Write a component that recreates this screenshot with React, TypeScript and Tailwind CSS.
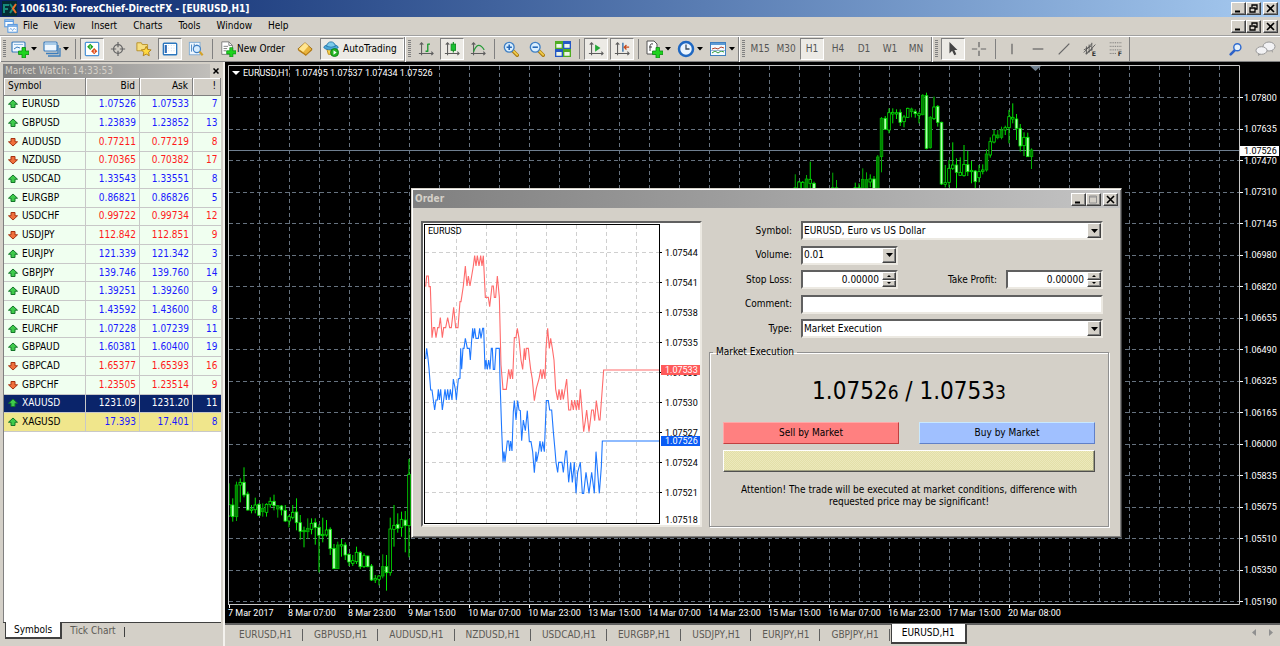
import React, { useState } from 'react';

type Quote = [string, string, string, number, 'up' | 'down'];

const quotes: Quote[] = [
  ['EURUSD', '1.07526', '1.07533', 7, 'up'],
  ['GBPUSD', '1.23839', '1.23852', 13, 'up'],
  ['AUDUSD', '0.77211', '0.77219', 8, 'down'],
  ['NZDUSD', '0.70365', '0.70382', 17, 'down'],
  ['USDCAD', '1.33543', '1.33551', 8, 'up'],
  ['EURGBP', '0.86821', '0.86826', 5, 'up'],
  ['USDCHF', '0.99722', '0.99734', 12, 'down'],
  ['USDJPY', '112.842', '112.851', 9, 'down'],
  ['EURJPY', '121.339', '121.342', 3, 'up'],
  ['GBPJPY', '139.746', '139.760', 14, 'up'],
  ['EURAUD', '1.39251', '1.39260', 9, 'up'],
  ['EURCAD', '1.43592', '1.43600', 8, 'up'],
  ['EURCHF', '1.07228', '1.07239', 11, 'up'],
  ['GBPAUD', '1.60381', '1.60400', 19, 'up'],
  ['GBPCAD', '1.65377', '1.65393', 16, 'down'],
  ['GBPCHF', '1.23505', '1.23514', 9, 'down'],
  ['XAUUSD', '1231.09', '1231.20', 11, 'up'],
  ['XAGUSD', '17.393', '17.401', 8, 'up'],
];

const chartTabs = ['EURUSD,H1', 'GBPUSD,H1', 'AUDUSD,H1', 'NZDUSD,H1', 'USDCAD,H1', 'EURGBP,H1', 'USDJPY,H1', 'EURJPY,H1', 'GBPJPY,H1'];
const prices = ['1.07800', '1.07635', '1.07470', '1.07310', '1.07145', '1.06980', '1.06820', '1.06655', '1.06490', '1.06325', '1.06165', '1.06000', '1.05835', '1.05675', '1.05510', '1.05350', '1.05190'];
const dates = ['7 Mar 2017', '8 Mar 07:00', '8 Mar 23:00', '9 Mar 15:00', '10 Mar 07:00', '10 Mar 23:00', '13 Mar 15:00', '14 Mar 07:00', '14 Mar 23:00', '15 Mar 15:00', '16 Mar 07:00', '16 Mar 23:00', '17 Mar 15:00', '20 Mar 08:00'];
const tickPrices = ['1.07544', '1.07541', '1.07538', '1.07535', '1.07533', '1.07530', '1.07527', '1.07524', '1.07521'];

// high, low, body top, body bottom, kind (0 hollow, 1 bear, 2 dark); units are 1/3 px
type Candle = [number, number, number, number, number];

const firstCandles: Candle[] = [
  [130, 230, 194, 228, 0], [175, 245, 195, 230, 1], [125, 243, 135, 230, 2], [115, 187, 127, 135, 0],
  [82, 172, 127, 165, 1], [155, 212, 162, 210, 1], [195, 220, 207, 211, 0], [173, 220, 195, 209, 0],
  [190, 228, 193, 226, 1], [190, 230, 205, 215, 2], [190, 230, 193, 217, 0], [172, 203, 184, 194, 0],
  [164, 211, 184, 197, 1], [195, 233, 197, 207, 2], [195, 226, 198, 210, 1], [195, 246, 211, 243, 1],
  [225, 262, 230, 243, 0], [195, 238, 217, 232, 0], [175, 271, 216, 248, 1], [225, 299, 248, 274, 1],
  [260, 322, 271, 275, 0], [235, 296, 265, 275, 2], [235, 283, 250, 268, 0], [235, 314, 248, 263, 1],
  [253, 397, 262, 286, 1], [233, 307, 283, 287, 0], [240, 290, 270, 285, 0], [262, 345, 268, 326, 1],
  [312, 387, 325, 386, 1], [305, 387, 315, 386, 2], [297, 350, 314, 318, 0], [307, 360, 315, 345, 1],
  [340, 378, 343, 366, 1], [345, 378, 362, 370, 0], [320, 372, 337, 365, 0], [333, 387, 337, 380, 1],
  [340, 384, 347, 380, 0], [347, 382, 348, 380, 1], [372, 423, 378, 420, 1], [405, 429, 415, 420, 0],
  [405, 436, 408, 418, 0], [343, 415, 380, 408, 2], [345, 452, 380, 398, 1], [233, 407, 267, 398, 0],
  [195, 320, 256, 268, 0], [220, 278, 253, 265, 1], [215, 290, 238, 262, 0], [213, 337, 240, 257, 1],
  [57, 352, 103, 257, 0],
];

const none: Candle = [340, 342, 340, 342, 2];
const lastCandles: Candle[] = [
  [283, 325, 323, 325, 2], [303, 325, 306, 340, 0], [303, 325, 307, 340, 0], [285, 325, 297, 340, 2],
  [245, 325, 298, 310, 0], [305, 325, 310, 340, 1], none, none, none, none, [278, 325, 323, 325, 2],
  [300, 325, 323, 325, 2], none, none, none, none, [308, 325, 323, 325, 0], [310, 325, 323, 325, 0],
  [265, 325, 298, 325, 2], [277, 325, 299, 325, 2], [283, 322, 297, 306, 0], [288, 325, 297, 325, 1],
  [225, 325, 231, 325, 2], [111, 277, 115, 230, 2], [108, 150, 115, 148, 1], [85, 160, 98, 150, 0],
  [85, 130, 97, 102, 0], [88, 117, 98, 102, 0], [88, 138, 97, 127, 1], [105, 142, 111, 125, 0],
  [83, 113, 85, 112, 0], [83, 112, 87, 95, 2], [88, 113, 95, 101, 1], [95, 130, 101, 106, 0],
  [42, 106, 46, 104, 2], [38, 208, 47, 205, 1], [108, 206, 112, 203, 2], [50, 120, 81, 116, 0],
  [75, 140, 79, 127, 1], [125, 315, 127, 312, 1], [255, 322, 308, 313, 0], [240, 322, 265, 307, 0],
  [187, 270, 255, 265, 0], [235, 325, 255, 277, 1], [232, 288, 277, 286, 0], [195, 290, 253, 287, 0],
  [213, 288, 254, 275, 1], [243, 310, 271, 275, 0], [270, 325, 273, 305, 1], [255, 307, 275, 293, 0],
  [253, 283, 270, 274, 0], [207, 275, 222, 270, 2], [172, 233, 185, 225, 0], [150, 190, 165, 186, 0],
  [150, 178, 165, 173, 2], [140, 178, 150, 172, 2], [137, 165, 143, 150, 0], [90, 190, 110, 143, 0],
  [70, 130, 112, 117, 0], [102, 180, 117, 145, 1], [132, 215, 145, 198, 1], [157, 228, 172, 197, 0],
  [158, 230, 172, 230, 1], [205, 267, 210, 230, 2],
];

const askLine = '47,-220 50,-252 55,-252 57,-220 61,-220 66,-67 70,-97 74,-97 78,-67 83,-97 87,-97 91,-127 97,-67 101,-97 107,-97 113,-127 119,-97 124,-97 131,-158 137,-97 144,-97 150,-175 153,-175 160,-222 166,-282 171,-222 175,-252 180,-222 185,-252 190,-282 194,-313 198,-282 202,-313 207,-282 212,-313 216,-282 220,-313 226,-188 235,-188 239,-160 246,-222 250,-222 253,-188 257,-188 262,-252 268,-188 273,15 279,88 289,88 296,28 301,57 304,28 308,57 313,-67 318,-67 322,-95 327,-65 333,0 338,28 343,-35 346,0 349,-35 355,-35 358,-5 362,28 367,58 373,122 379,85 387,57 392,28 396,57 400,28 405,57 408,-35 413,-95 418,-35 422,-65 427,-35 432,0 437,88 443,120 447,88 452,120 456,88 460,118 465,88 470,57 476,150 482,150 485,120 490,150 494,120 499,150 503,120 507,150 511,88 516,150 521,215 526,182 530,150 537,215 545,150 550,150 554,182 559,122 567,180 570,180 581,30 748,30';
const bidLine = '47,-3 50,-35 54,-5 57,25 62,90 66,90 70,120 74,150 78,120 82,120 85,88 88,120 92,88 97,150 101,120 105,88 109,120 113,88 117,120 121,88 126,120 130,57 136,88 139,120 145,57 150,55 152,-35 155,28 159,-35 162,-35 166,-65 172,-35 178,-35 181,0 185,-60 188,-95 190,-65 194,-95 198,-65 205,-65 209,-95 213,-65 218,-95 221,-95 225,28 228,0 232,28 236,0 240,28 244,-35 247,-35 250,28 254,28 258,-35 268,-35 270,60 275,210 279,305 282,275 285,305 292,243 296,243 299,273 302,243 306,273 310,155 313,122 318,180 323,122 327,150 331,152 335,242 340,180 346,212 352,152 358,245 363,245 368,275 373,338 378,275 380,305 386,275 390,243 394,275 398,245 403,275 409,122 415,122 419,150 425,150 430,215 435,270 438,307 443,337 446,307 456,307 460,337 467,273 470,273 476,367 482,307 487,367 493,307 498,400 503,337 511,307 517,400 521,400 528,337 537,400 545,337 553,400 558,275 568,400 574,320 577,243 748,243';

const raised = 'border border-t-white border-l-white border-r-[#404040] border-b-[#404040] bg-[#d4d0c8] shadow-[inset_-1px_-1px_0_#808080]';
const sunken = 'border-2 border-t-[#606060] border-l-[#606060] border-r-[#ece9e2] border-b-[#ece9e2] bg-white';
const pushed = 'border border-t-[#808080] border-l-[#808080] border-r-white border-b-white bg-[#eceae5]';

function Icon({ children, size = 18 }: { children: React.ReactNode; size?: number }) {
  return (
    <svg width={size} height={size} viewBox="0 0 18 18" fill="none" className="shrink-0" aria-hidden="true">
      {children}
    </svg>
  );
}

const Plus = () => (
  <path d="M11 7.5h3.5v3.5H18v3.5h-3.5V18H11v-3.5H7.5V11H11z" fill="#1fd41f" stroke="#0a8a12" strokeWidth=".8" />
);

const Axes = () => <path d="M4 2v14M1 14h16M2 4l2-2 2 2M15 12l2 2-2 2" stroke="#5d5d5d" strokeWidth="1.2" />;

const Lens = ({ sign }: { sign: string }) => (
  <>
    <path d="m11 11 5 5" stroke="#a97a10" strokeWidth="4" strokeLinecap="round" />
    <path d="m11.5 11 4.5 4.5" stroke="#f0cb4a" strokeWidth="2" strokeLinecap="round" />
    <circle cx="7" cy="7" r="5.5" fill="#d9efff" stroke="#3f7fc4" strokeWidth="1.5" />
    <path d={sign} stroke="#2668b8" strokeWidth="1.8" />
  </>
);

const icons: Record<string, React.ReactNode> = {
  newChart: <><rect x="1" y="2" width="13" height="10" rx="1" fill="#eef7ff" stroke="#3b7dbd" strokeWidth="1.2" /><path d="M3 4.5h9" stroke="#8ab8e0" /><path d="m3 9 3-2 3 1" stroke="#3b7dbd" /><Plus /></>,
  profiles: <><path d="M5 16h12V8" stroke="#3b7dbd" strokeWidth="1.3" /><path d="M3 13.5h12V5" stroke="#3b7dbd" strokeWidth="1.3" /><rect x="1" y="2" width="13" height="9" rx="1" fill="#eef7ff" stroke="#3b7dbd" strokeWidth="1.2" /><path d="M2 4h11" stroke="#8fbde2" strokeWidth="1.5" /></>,
  market: <><rect x="1.5" y="1.5" width="15" height="15" rx="1" fill="#fff" stroke="#4c94d8" strokeWidth="1.4" /><path d="m7 3 3.500 3.500L7 10 3.500 6.500z" fill="#18a51b" /><path d="m11.500 8 3.500 3.500-3.500 3.500L8 11.500z" fill="#e04a15" /><path d="M7 5v3.500M11.500 10v3.500" stroke="#fff" strokeWidth=".8" /></>,
  target: <><circle cx="9" cy="9" r="5" stroke="#666" strokeWidth="1.5" /><path d="M9 1v6M9 11v6M1 9h6M11 9h6" stroke="#666" strokeWidth="1.4" /></>,
  favorites: <><path d="M1 2h5l1 2h6v7H1z" fill="#f7df80" stroke="#b48c22" /><path d="m11.5 6 1.700 3.500 3.800.5-2.800 2.700.7 3.900-3.400-1.900-3.400 1.900.7-3.900L6 10l3.800-.5z" fill="#ffd940" stroke="#ad7b12" /></>,
  navigator: <><rect x="1.5" y="2.5" width="15" height="13" rx="1" fill="#fff" stroke="#2d78bf" strokeWidth="1.5" /><path d="M3 4.500h2.500v9H3z" fill="#2d6cb8" /><path d="M7 5h1m2 0h1m2 0h1M7 8h1m2 0h1m2 0h1M7 11h1m2 0h1m2 0h1" stroke="#b9d6ee" /></>,
  tester: <><rect x="1.5" y="1.5" width="12" height="14" fill="#eff7ff" stroke="#7aa9d4" /><path d="M4 4v8M7 3v8M10 4v6" stroke="#3b7dbd" /><circle cx="10" cy="9" r="4" fill="#d8edff" stroke="#3f7fc4" strokeWidth="1.3" /><path d="m13 12 3.500 4" stroke="#d4a228" strokeWidth="2.4" /></>,
  order: <><path d="M2 1h8l4 4v10H2z" fill="#fff" stroke="#777" /><path d="M10 1v4h4M4 6h5M4 8.500h4M4 11h3" stroke="#777" /><Plus /></>,
  book: <><path d="M1 9 9 2l8 7-7 7z" fill="#e9b43c" stroke="#9b6a12" /><path d="m2 9 7-7 4 3.500-6 7z" fill="#ffe58f" /><path d="m1 9 .5 2 8.500 5.500 7-6V9l-7 6z" fill="#b97f18" /></>,
  robot: <><path d="M4 8h10l-1 7H6z" fill="#f7d34d" stroke="#ba8a19" /><ellipse cx="9" cy="7" rx="8" ry="3" fill="#4aa8d8" stroke="#2878ab" /><path d="M4 6q1-5 5-5t5 5q-5 2-10 0" fill="#7bcbea" stroke="#2878ab" /><circle cx="13" cy="13" r="4.5" fill="#22b422" stroke="#0c7c14" /><path d="m11.800 10.500 3.500 2.500-3.500 2.500z" fill="#fff" /></>,
  bars: <><Axes /><path d="M11 3v9M11 3.500h2.500M8.500 11.500H11" stroke="#199b2c" strokeWidth="1.5" /></>,
  candles: <><Axes /><path d="M10.500 1v12" stroke="#128c21" strokeWidth="1.3" /><rect x="8" y="3.5" width="5" height="7" fill="#19c231" stroke="#128c21" /></>,
  line: <><Axes /><path d="M4 12q5-13 12-2" stroke="#259b37" strokeWidth="1.4" /></>,
  zoomIn: <Lens sign="M4 7h6M7 4v6" />,
  zoomOut: <Lens sign="M4 7h6" />,
  tile: <><path d="M0 0h9v9H0z" fill="#4fac22" /><path d="M9 0h9v9H9z" fill="#2458c4" /><path d="M0 9h9v9H0z" fill="#2458c4" /><path d="M9 9h9v9H9z" fill="#4fac22" /><path d="M1.500 3.500h6v4h-6zM10.500 3.500h6v4h-6zM1.500 12.500h6v4h-6zM10.500 12.500h6v4h-6z" fill="#eef6e8" /></>,
  scroll: <><Axes /><path d="m8 4 6 4-6 4z" fill="#22a837" /></>,
  shift: <><Axes /><path d="M10 2v10" stroke="#2c6ca8" strokeWidth="1.5" /><path d="M17 7h-5M14 4.500 11.500 7 14 9.500" stroke="#c84a1a" strokeWidth="1.4" /></>,
  indicators: <><path d="M2 1h7l3 3v10H2z" fill="#fff" stroke="#555" /><path d="M8 4Q5 3 5 7v4M4 7h3" stroke="#444" /><Plus /></>,
  clock: <><circle cx="9" cy="9" r="7" fill="#eaf5ff" stroke="#1f68c2" strokeWidth="2.5" /><path d="M9 4.500V9h3.500" stroke="#3a4b5c" strokeWidth="1.3" /></>,
  template: <><rect x="1.5" y="2.5" width="15" height="13" fill="#f4fbff" stroke="#3f7fbf" /><path d="M2 4h14" stroke="#5c9bd5" strokeWidth="2" /><path d="m3 9 3-1 3 1 3-2 3 1" stroke="#b34128" /><path d="m3 13 3-2 3 2 3-2 3 1" stroke="#309b3c" /><path d="M2 10.500h14" stroke="#9bb9d4" /></>,
  cursor: <path d="M5 1v13l3-3 2.500 5 2.200-1L10.500 10H14z" fill="#444" />,
  cross: <path d="M9 1v6M9 11v6M1 9h6M11 9h6" stroke="#666" strokeWidth="1.4" />,
  vline: <path d="M9 3v12" stroke="#666" strokeWidth="1.4" />,
  hline: <path d="M3 9h12" stroke="#666" strokeWidth="1.4" />,
  trend: <path d="M3 15 15 3" stroke="#666" strokeWidth="1.4" />,
  channel: <><path d="m2 13 9-10M5 15 15 4M2 10l8-4M4 14l8-5M5 6v9M8 4v9M11 2v9" stroke="#555" /><text x="11" y="17" fontSize="7" fill="#333" fontFamily="DejaVu Sans" fontWeight="bold">E</text></>,
  fibo: <><path d="M2 2h14M2 6h14M2 10h14M2 14h8" stroke="#666" strokeDasharray="1 1" /><text x="11" y="17" fontSize="7" fill="#333" fontFamily="DejaVu Sans" fontWeight="bold">F</text></>,
  search: <><path d="m8 10-5 5" stroke="#2e62c8" strokeWidth="3" strokeLinecap="round" /><circle cx="10.5" cy="7" r="4" fill="#e5f1fb" stroke="#2e6ad0" strokeWidth="1.6" /></>,
};

function Tool({ name, label, pressed = false }: { name: string; label: string; pressed?: boolean }) {
  return (
    <button aria-label={label} className={`mx-px flex h-[22px] w-6 items-center justify-center ${pressed ? pushed : ''}`}>
      <Icon size={16}>{icons[name]}</Icon>
    </button>
  );
}

function DropTool({ name, label }: { name: string; label: string }) {
  return (
    <button aria-label={label} className="flex h-[22px] w-8 items-center justify-center gap-[2px]">
      <Icon>{icons[name]}</Icon>
      <svg width="6" height="4" aria-hidden="true"><path d="M0 0h6L3 3.500z" fill="#000" /></svg>
    </button>
  );
}

const Sep = () => <span className="mx-[3px] h-5 w-px bg-[#808080]" />;
const Grip = () => <span className="mx-[2px] h-[18px] w-[3px] bg-[repeating-linear-gradient(to_bottom,#808080_0_1px,#d4d0c8_1px_2px)]" />;

function ToolGroup({ children }: { children: React.ReactNode }) {
  return <div className="flex h-[25px] items-center border-r border-l border-l-white border-r-[#808080]">{children}</div>;
}

function WindowButtons({ disabledMax = false }: { disabledMax?: boolean }) {
  const base = `flex h-[13px] w-[15px] items-center justify-center ${raised}`;
  return (
    <div className="flex">
      <button aria-label="Minimize" className={base}>
        <svg width="9" height="9"><path d="M1 7.500h5" stroke="#000" strokeWidth="2" /></svg>
      </button>
      <button aria-label="Restore" className={base}>
        {disabledMax ? (
          <svg width="9" height="9"><path d="M.5 1h7v7h-7zM.5 2h7" stroke="#909090" fill="none" /></svg>
        ) : (
          <svg width="9" height="9"><path d="M3 3V1h5v4H6M1 4h5v4H1z" stroke="#000" strokeWidth="1.3" fill="none" /></svg>
        )}
      </button>
      <button aria-label="Close" className={`ml-[2px] ${base}`}>
        <svg width="9" height="9"><path d="m1 1 7 7M8 1 1 8" stroke="#000" strokeWidth="1.6" /></svg>
      </button>
    </div>
  );
}

function Arrow({ dir }: { dir: 'up' | 'down' }) {
  return dir === 'up' ? (
    <svg width="10" height="10" viewBox="0 0 10 10" className="shrink-0"><path d="m5 1 4.500 4.200H7V8.500H3V5.200H.5z" fill="#3ecb4b" stroke="#14752a" /></svg>
  ) : (
    <svg width="10" height="10" viewBox="0 0 10 10" className="shrink-0"><path d="M5 9 .5 4.800H3V1.500h4v3.300h2.500z" fill="#f0703c" stroke="#a53312" /></svg>
  );
}

function MarketWatch() {
  const th = 'border-r border-b border-[#808080] bg-[#d4d0c8] px-[4px] font-normal shadow-[inset_1px_1px_0_#fff]';
  return (
    <aside className="flex w-[225px] shrink-0 flex-col border-r-2 border-r-[#f4f2ee] pt-[2px] pr-[2px] pb-[6px] pl-[3px]">
      <div className="flex h-[14px] items-center justify-between bg-gradient-to-r from-[#808080] to-[#c4c2be] pl-[2px] text-[#d4d0c8]">
        <span>Market Watch: 14:33:53</span>
        <button aria-label="Close" className="flex h-[14px] w-[11px] items-center justify-center bg-[#d4d0c8]">
          <svg width="6" height="6"><path d="m.5.5 5 5M5.500.5l-5 5" stroke="#000" strokeWidth="1.5" /></svg>
        </button>
      </div>
      <div className="flex flex-1 flex-col border-l border-[#808080] bg-white">
        <table className="h-[354px] w-full table-fixed border-collapse">
          <colgroup>
            <col />
            <col className="w-[54px]" />
            <col className="w-[53px]" />
            <col className="w-[28px]" />
          </colgroup>
          <thead>
            <tr className="h-[17px]">
              <th className={`text-left ${th}`}>Symbol</th>
              <th className={`text-right ${th}`}>Bid</th>
              <th className={`text-right ${th}`}>Ask</th>
              <th className={`text-right ${th}`}>!</th>
            </tr>
          </thead>
          <tbody>
            {quotes.map(([symbol, bid, ask, spread, dir]) => {
              const selected = symbol === 'XAUUSD';
              const gold = symbol === 'XAGUSD';
              const num = `border-l border-[#c8c8c8] pr-[3px] text-right ${selected ? 'text-white' : dir === 'up' ? 'text-[#1a1aff]' : 'text-[#ff1a1a]'}`;
              return (
                <tr key={symbol} className={`border-b border-[#c8c8c8] ${selected ? 'bg-[#0a246a] text-white' : gold ? 'bg-[#f0e68c]' : 'bg-[#f0fff0]'}`}>
                  <td className="p-0 pl-1">
                    <span className="flex items-center gap-1"><Arrow dir={dir} />{symbol}</span>
                  </td>
                  <td className={num}>{bid}</td>
                  <td className={num}>{ask}</td>
                  <td className={num}>{spread}</td>
                </tr>
              );
            })}
          </tbody>
        </table>
      </div>
      <div className="flex h-[18px] items-start border-t border-[#404040] pl-[2px]">
        <button className="-mt-px h-[17px] border-r-2 border-b-2 border-l border-[#404040] bg-white px-2">Symbols</button>
        <button className="h-4 px-2 text-[#5c5a55]">Tick Chart</button>
        <span className="mt-1 h-[10px] w-px bg-[#404040]" />
      </div>
    </aside>
  );
}

function Candles({ data, from, base }: { data: Candle[]; from: number; base: number }) {
  return (
    <g>
      {data.map(([high, low, top, bottom, kind], i) => {
        const x = 4 + (from + i) * 3.75;
        const fill = kind === 1 ? '#b4ffb4' : kind === 2 ? '#008200' : '#000';
        const stroke = kind === 2 ? '#00b000' : '#00e600';
        return (
          <g key={i} stroke={stroke}>
            <path d={`M${x} ${base + high / 3}V${base + low / 3}`} />
            <rect x={x - 1.3} y={base + top / 3} width="2.6" height={Math.max(1, (bottom - top) / 3)} fill={fill} strokeWidth=".8" />
          </g>
        );
      })}
    </g>
  );
}

function PriceChart() {
  return (
    <svg viewBox="0 0 1055 561" className="block h-auto w-full bg-black font-['Roboto',sans-serif] text-[9px]" role="img" aria-label="EURUSD,H1 chart">
      <g stroke="#66727f" strokeDasharray="4 3">
        {Array.from({ length: 33 }, (_, i) => <path key={i} d={`M${34.5 + i * 30} 4V542`} />)}
        {prices.map((p, i) => {
          const y = Math.round(35 + i * 31.53) + 0.5;
          return <path key={p} d={`M4 ${y}H1014`} />;
        })}
      </g>
      <path d="M3 88.5h1012" stroke="#6f7f90" />
      <clipPath id="plot"><path d="M3 3h1012v539H3z" /></clipPath>
      <g clipPath="url(#plot)">
        <Candles data={firstCandles} from={0} base={378} />
        <Candles data={lastCandles} from={151} base={18} />
      </g>
      <path d="M3.5 542V3.500H1014.500V542.500H3" fill="none" stroke="#c8c8c8" />
      <path d="M805 4h11l-5.500 5z" fill="#708090" />
      <path d="M7 9h8l-4 4z" fill="#fff" />
      <text x="18" y="14" fill="#fff">EURUSD,H1</text>
      <text x="70" y="14" fill="#fff">1.07495 1.07537 1.07434 1.07526</text>
      {prices.map((p, i) => (
        <g key={p}>
          <path d={`M1015 ${Math.round(35 + i * 31.53) + 0.5}h3`} stroke="#fff" />
          <text x="1019" y={Math.round(38.5 + i * 31.53)} fill="#fff">{p}</text>
        </g>
      ))}
      <rect x="1015" y="84" width="39" height="10" fill="#fff" />
      <text x="1019" y="92" fill="#000">1.07526</text>
      {dates.map((d, i) => (
        <g key={d}>
          <path d={`M${4.5 + i * 60} 543v3`} stroke="#fff" />
          <text x={3 + i * 60} y="554" fill="#fff">{d}</text>
        </g>
      ))}
    </svg>
  );
}

function TickChart() {
  return (
    <div className={`w-[281px] shrink-0 self-start ${sunken}`}>
      <svg viewBox="0 0 277 302" className="block w-full font-['Roboto',sans-serif] text-[9px]" role="img" aria-label="EURUSD tick chart">
        <g stroke="#cfcfcf" strokeDasharray="4 3">
          {[33, 63, 93, 123, 153, 183, 213].map((x) => <path key={x} d={`M${x + 0.5} 2V300`} />)}
          {tickPrices.map((p, i) => <path key={p} d={`M2 ${29.5 + i * 30}H237`} />)}
        </g>
        <g transform="translate(-13 137) scale(.33333)" fill="none" strokeWidth="3.3">
          <polyline points={askLine} stroke="#ff6b6b" />
          <polyline points={bidLine} stroke="#1e78ff" />
        </g>
        <rect x="1.5" y="1.5" width="235" height="299" fill="none" stroke="#000" />
        <text x="5" y="11">EURUSD</text>
        {tickPrices.map((p, i) => (
          <g key={p}>
            <path d={`M237 ${29.5 + i * 30}h2`} stroke="#000" />
            <text x="242" y={33 + i * 30}>{p}</text>
          </g>
        ))}
        <text x="242" y="300">1.07518</text>
        <rect x="238" y="142" width="39" height="10" fill="#ff5a5a" />
        <text x="242" y="150" fill="#fff">1.07533</text>
        <rect x="238" y="213" width="39" height="10" fill="#0a5cf5" />
        <text x="242" y="221" fill="#fff">1.07526</text>
      </svg>
    </div>
  );
}

function SelectBox({ id, width, value }: { id: string; width: string; value: string }) {
  return (
    <div className={`relative h-[19px] ${width} ${sunken}`}>
      <select id={id} className="block h-full w-full appearance-none bg-transparent pl-px outline-none">
        <option>{value}</option>
      </select>
      <span className={`pointer-events-none absolute inset-y-0 right-0 flex w-[14px] items-center justify-center ${raised}`}>
        <svg width="7" height="4"><path d="M0 0h7L3.500 4z" fill="#000" /></svg>
      </span>
    </div>
  );
}

function SpinBox({ id }: { id: string }) {
  const [value, setValue] = useState(0);
  const btn = `flex flex-1 w-[14px] items-center justify-center ${raised}`;
  return (
    <div className={`flex h-[19px] w-[97px] ${sunken}`}>
      <input id={id} className="w-full min-w-0 pr-[3px] text-right outline-none" value={value.toFixed(5)} readOnly />
      <div className="flex shrink-0 flex-col">
        <button aria-label="Increase" className={btn} onClick={() => setValue(value + 0.00001)}>
          <svg width="4" height="2"><path d="M0 2h4L2 0z" fill="#000" /></svg>
        </button>
        <button aria-label="Decrease" className={btn} onClick={() => setValue(Math.max(0, value - 0.00001))}>
          <svg width="4" height="2"><path d="M0 0h4L2 2z" fill="#000" /></svg>
        </button>
      </div>
    </div>
  );
}

function OrderDialog() {
  const label = 'w-[83px] shrink-0 text-right';
  return (
    <section role="dialog" aria-label="Order" className="absolute top-[126px] left-[186px] w-[711px] border border-t-[#d4d0c8] border-l-[#d4d0c8] border-r-[#404040] border-b-[#404040] bg-[#d4d0c8] p-px shadow-[inset_1px_1px_0_#fff,inset_-1px_-1px_0_#808080]">
      <div className="flex h-[18px] items-center justify-between bg-gradient-to-r from-[#808080] to-[#c4c4c4] pr-[2px] pl-[2px] font-bold text-[#d4d0c8]">
        <span>Order</span>
        <WindowButtons disabledMax />
      </div>
      <div className="flex gap-[7px] pt-[13px] pr-[11px] pb-[9px] pl-2">
        <TickChart />
        <div className="flex min-w-0 flex-1 flex-col justify-between">
          <div className="flex h-[117px] flex-col justify-between pr-[6px]">
            <div className="flex items-center gap-[9px]">
              <label htmlFor="symbol" className={label}>Symbol:</label>
              <SelectBox id="symbol" width="flex-1" value="EURUSD, Euro vs US Dollar" />
            </div>
            <div className="flex items-center gap-[9px]">
              <label htmlFor="volume" className={label}>Volume:</label>
              <SelectBox id="volume" width="w-[97px]" value="0.01" />
            </div>
            <div className="flex items-center gap-[9px]">
              <label htmlFor="sl" className={label}>Stop Loss:</label>
              <SpinBox id="sl" />
              <label htmlFor="tp" className="ml-auto">Take Profit:</label>
              <SpinBox id="tp" />
            </div>
            <div className="flex items-center gap-[9px]">
              <label htmlFor="comment" className={label}>Comment:</label>
              <input id="comment" className={`h-[19px] min-w-0 flex-1 outline-none ${sunken}`} />
            </div>
            <div className="flex items-center gap-[9px]">
              <label htmlFor="type" className={label}>Type:</label>
              <SelectBox id="type" width="flex-1" value="Market Execution" />
            </div>
          </div>
          <fieldset className="h-[181px] border border-[#909090] px-[13px] shadow-[1px_1px_0_#fff,inset_1px_1px_0_#fff]">
            <legend className="-ml-[10px] px-[3px]">Market Execution</legend>
            <p className="mt-[17px] text-center text-[24px] leading-[32px]">
              1.0752<span className="text-[19px]">6</span> / 1.0753<span className="text-[19px]">3</span>
            </p>
            <div className="mt-[14px] flex gap-5">
              <button className="h-[22px] flex-1 border border-t-[#ffa8a8] border-l-[#ffa8a8] border-r-[#c04040] border-b-[#c04040] bg-[#ff8080]">Sell by Market</button>
              <button className="h-[22px] flex-1 border border-t-[#c8e8ff] border-l-[#c8e8ff] border-r-[#6080c8] border-b-[#6080c8] bg-[#a0c0ff]">Buy by Market</button>
            </div>
            <div className="mt-[6px] h-[22px] border border-t-white border-l-white border-r-[#505050] border-b-[#505050] bg-[#e8e6b0] bg-[repeating-conic-gradient(#ece9bc_0_25%,#e3dfa8_0_50%)] bg-size-[2px_2px] shadow-[inset_-1px_-1px_0_#a0a080]" />
            <p className="mt-3 text-center leading-3">
              Attention! The trade will be executed at market conditions, difference with
              <br />
              requested price may be significant!
            </p>
          </fieldset>
        </div>
      </div>
    </section>
  );
}

export default function App() {
  return (
    <div className="flex min-h-screen w-full flex-col bg-[#d4d0c8] font-['DejaVu_Sans_Condensed','DejaVu_Sans',sans-serif] text-[10px] leading-3 text-black">
      <header className="flex h-[17px] items-center justify-between bg-gradient-to-r from-[#0a246a] to-[#a6caf0] pr-[2px] pl-[2px] text-white">
        <div className="flex items-center gap-[3px] font-bold">
          <svg width="15" height="15" viewBox="0 0 15 15">
            <rect width="15" height="15" fill="#042c33" />
            <path d="M2 12V4h5M2 8h4" stroke="#168b7b" strokeWidth="2" fill="none" />
            <path d="m8 3 3 4.500L8 12" stroke="#168b7b" strokeWidth="2" fill="none" />
            <path d="m14 3-3 4.500 3 4.500" stroke="#ed702c" strokeWidth="2" fill="none" />
          </svg>
          <h1>1006130: ForexChief-DirectFX - [EURUSD,H1]</h1>
        </div>
        <WindowButtons />
      </header>

      <nav className="flex h-[19px] items-center border-b border-[#a0a0a0] pr-[2px] pl-[4px]">
        <Icon size={14}>
          <rect x="1" y="1" width="11" height="9" fill="#fff" stroke="#5c9be0" strokeWidth="1.4" />
          <rect x="5" y="7" width="12" height="10" fill="#fff" stroke="#5c9be0" strokeWidth="1.4" />
          <path d="M1 3h11M5 9h12" stroke="#5c9be0" strokeWidth="2" />
          <path d="m7 14 2-2 2 3 2-3 2 2" stroke="#5c9be0" />
        </Icon>
        <div className="ml-[5px] flex flex-1 gap-4">
          {['File', 'View', 'Insert', 'Charts', 'Tools', 'Window', 'Help'].map((m) => <button key={m}>{m}</button>)}
        </div>
        <WindowButtons />
      </nav>

      <div className="flex h-[26px] items-center border-t border-b border-t-white border-b-[#808080]">
        <ToolGroup>
          <Grip />
          <DropTool name="newChart" label="New chart" />
          <DropTool name="profiles" label="Profiles" />
          <Sep />
          <Tool name="market" label="Market Watch" pressed />
          <Tool name="target" label="Data Window" />
          <Tool name="favorites" label="Favorites" />
          <Tool name="navigator" label="Navigator" pressed />
          <Tool name="tester" label="Strategy Tester" />
          <Sep />
          <button className="flex w-[76px] items-center gap-px pl-1 whitespace-nowrap"><Icon size={16}>{icons.order}</Icon>New Order</button>
          <Tool name="book" label="MetaEditor" />
          <button className={`ml-[2px] flex h-[22px] w-[84px] items-center gap-1 pl-[2px] ${pushed}`}>
            <Icon size={16}>{icons.robot}</Icon>AutoTrading
          </button>
        </ToolGroup>
        <ToolGroup>
          <Grip />
          <Tool name="bars" label="Bar chart" />
          <Tool name="candles" label="Candlesticks" pressed />
          <Tool name="line" label="Line chart" />
          <Sep />
          <Tool name="zoomIn" label="Zoom in" />
          <Tool name="zoomOut" label="Zoom out" />
          <Tool name="tile" label="Tile windows" />
          <Sep />
          <Tool name="scroll" label="Auto scroll" pressed />
          <Tool name="shift" label="Chart shift" pressed />
          <Sep />
          <DropTool name="indicators" label="Indicators" />
          <DropTool name="clock" label="Periods" />
          <DropTool name="template" label="Templates" />
        </ToolGroup>
        <ToolGroup>
          <Grip />
          <div className="flex pr-[2px]">
            {['M15', 'M30', 'H1', 'H4', 'D1', 'W1', 'MN'].map((t) => (
              <button key={t} className={`mx-px h-[22px] w-6 text-[#555] ${t === 'H1' ? pushed : ''}`}>{t}</button>
            ))}
          </div>
        </ToolGroup>
        <ToolGroup>
          <Grip />
          <Tool name="cursor" label="Cursor" pressed />
          <Tool name="cross" label="Crosshair" />
          <Sep />
          <Tool name="vline" label="Vertical line" />
          <Tool name="hline" label="Horizontal line" />
          <Tool name="trend" label="Trendline" />
          <Tool name="channel" label="Channel" />
          <Tool name="fibo" label="Fibonacci" />
        </ToolGroup>
        <div className="ml-auto flex items-center gap-[6px] pr-1">
          <Tool name="search" label="Search" />
          <button aria-label="Chat">
            <svg width="21" height="16" viewBox="0 0 21 16">
              <path d="m15 8 3 4-1-4z" fill="#888" />
              <ellipse cx="14" cy="5.5" rx="6" ry="4.5" fill="#f2f2f4" stroke="#999" />
              <path d="m4 11-1 4 4-3z" fill="#888" />
              <ellipse cx="6.5" cy="9.5" rx="5.5" ry="3.8" fill="#f2f2f4" stroke="#999" />
            </svg>
          </button>
        </div>
      </div>

      <main className="flex flex-1 items-stretch">
        <MarketWatch />
        <div className="relative min-w-0 flex-1">
          <PriceChart />
          <div className="flex h-[21px] items-start border-t-2 border-[#606060] pl-1 text-[#5c5a55]">
            {chartTabs.map((t) => (
              <React.Fragment key={t}>
                <button className="mt-[2px] h-4 px-[10px]">{t}</button>
                <span className="mt-1 mr-px h-3 w-px bg-[#606060]" />
              </React.Fragment>
            ))}
            <button className="-mt-px h-5 border-r-2 border-b-2 border-l border-[#404040] bg-white px-[10px] text-black">EURUSD,H1</button>
            <div className="mt-1 ml-auto flex gap-[13px] pr-[7px]">
              <button aria-label="Scroll left"><svg width="4" height="7"><path d="M4 0v7L0 3.500z" fill="#909090" /></svg></button>
              <button aria-label="Scroll right"><svg width="4" height="7"><path d="M0 0v7l4-3.500z" fill="#909090" /></svg></button>
            </div>
          </div>
          <OrderDialog />
        </div>
      </main>
    </div>
  );
}
